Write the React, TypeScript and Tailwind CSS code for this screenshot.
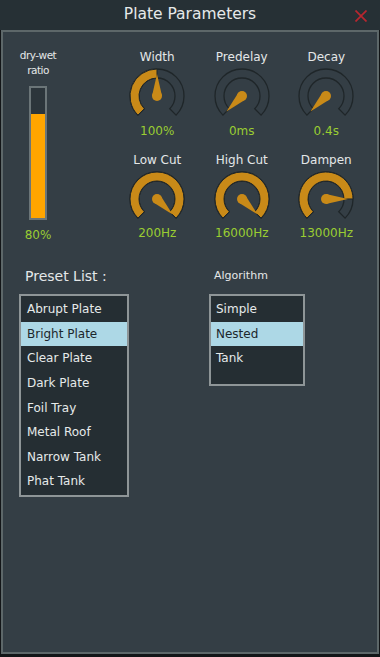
const ORANGE = '#c98a18';
const OUTLINE = '#1f2629';

type KnobProps = { label: string; value: string; frac: number };

const CX = 30;
const CY = 28;
const R_OUT = 27;
const R_IN = 18;

function pt(r: number, deg: number) {
  const a = (deg * Math.PI) / 180;
  return [CX + r * Math.sin(a), CY - r * Math.cos(a)];
}

function sector(a0: number, a1: number) {
  const large = a1 - a0 > 180 ? 1 : 0;
  const [x0, y0] = pt(R_OUT, a0);
  const [x1, y1] = pt(R_OUT, a1);
  const [x2, y2] = pt(R_IN, a1);
  const [x3, y3] = pt(R_IN, a0);
  return `M${x0} ${y0} A${R_OUT} ${R_OUT} 0 ${large} 1 ${x1} ${y1} L${x2} ${y2} A${R_IN} ${R_IN} 0 ${large} 0 ${x3} ${y3} Z`;
}

function Knob({ label, value, frac }: KnobProps) {
  const angle = -135 + 270 * frac;
  const [tx, ty] = pt(22, angle);
  const [lx, ly] = pt(5, angle - 90);
  const [rx, ry] = pt(5, angle + 90);

  return (
    <div className="flex w-[84.5px] flex-col items-center">
      <span className="text-[12px] leading-[14px] text-[#e4e7e8]">{label}</span>
      <svg width="60" height="48" viewBox="0 0 60 48" className="mt-[4px]">
        <path d={sector(-135, 135)} fill="none" stroke={OUTLINE} strokeWidth="1.3" />
        {frac > 0 && <path d={sector(-135, angle)} fill={ORANGE} stroke={OUTLINE} strokeWidth="1" />}
        <polygon points={`${lx},${ly} ${tx},${ty} ${rx},${ry}`} fill={ORANGE} />
        <circle cx={CX} cy={CY} r="5" fill={ORANGE} />
      </svg>
      <span className="mt-[7.5px] text-[12px] leading-[14px] text-[#9acd32]">{value}</span>
    </div>
  );
}

const presets = [
  'Abrupt Plate',
  'Bright Plate',
  'Clear Plate',
  'Dark Plate',
  'Foil Tray',
  'Metal Roof',
  'Narrow Tank',
  'Phat Tank',
];

const algorithms = ['Simple', 'Nested', 'Tank'];

function ListBox({ items, selected, className, pad }: { items: string[]; selected: string; className: string; pad: string }) {
  return (
    <div className={`border-2 border-[#8e9597] bg-[#252e33] pt-[1px] ${className}`}>
      {items.map((item) => (
        <div
          key={item}
          className={`flex h-[24.6px] items-center text-[12px] ${pad} ${
            item === selected ? 'bg-[#add8e6] text-[#1c272c]' : 'text-[#e6eaea]'
          }`}
        >
          {item}
        </div>
      ))}
    </div>
  );
}

export default function App() {
  return (
    <div className="flex h-[657px] w-[380px] flex-col bg-[#121517] font-['DejaVu_Sans',sans-serif]">
      <div className="relative flex h-[30px] items-center justify-center bg-[#263035]">
        <span className="text-[15.5px] text-[#e6e9ea]">Plate Parameters</span>
        <svg width="12" height="12" viewBox="0 0 12 12" className="absolute right-[13px] top-[10px]">
          <path d="M0.5 0.5 L11.5 11.5 M11.5 0.5 L0.5 11.5" stroke="#b8262f" strokeWidth="1.7" />
        </svg>
      </div>

      <div className="mx-[1px] mb-[3px] flex-1 border-2 border-[#5d6769] bg-[#343e45]">
        <div className="flex items-start">
          <div className="flex w-[70px] flex-col items-center pt-[15.5px]">
            <span className="text-[10.5px] leading-[15px] tracking-[-0.5px] text-[#e4e7e8]">dry-wet</span>
            <span className="text-[10.5px] leading-[15px] tracking-[-0.5px] text-[#e4e7e8]">ratio</span>
            <div className="mt-[8.5px] flex h-[134px] w-[18px] flex-col justify-end border-2 border-[#6b7578] bg-[#2c353b]">
              <div className="h-[80%] bg-[#ffa500]" />
            </div>
            <span className="mt-[8px] text-[12px] leading-[14px] text-[#9acd32]">80%</span>
          </div>

          <div className="ml-[42px] pt-[18px]">
            <div className="flex">
              <Knob label="Width" value="100%" frac={0.5} />
              <Knob label="Predelay" value="0ms" frac={0} />
              <Knob label="Decay" value="0.4s" frac={0} />
            </div>
            <div className="mt-[15px] flex">
              <Knob label="Low Cut" value="200Hz" frac={1} />
              <Knob label="High Cut" value="16000Hz" frac={1} />
              <Knob label="Dampen" value="13000Hz" frac={0.833} />
            </div>
          </div>
        </div>

        <div className="mt-[26px] flex pl-[16px]">
          <div className="flex flex-col">
            <span className="ml-[6px] text-[14px] leading-[16px] text-[#e4e7e8]">Preset List :</span>
            <ListBox items={presets} selected="Bright Plate" className="mt-[10px] h-[203px] w-[110px]" pad="pl-[6px]" />
          </div>
          <div className="ml-[80px] flex flex-col">
            <span className="ml-[5px] text-[11px] leading-[16px] text-[#e4e7e8]">Algorithm</span>
            <ListBox items={algorithms} selected="Nested" className="mt-[10px] h-[92px] w-[96px]" pad="pl-[5px]" />
          </div>
        </div>
      </div>
    </div>
  );
}
